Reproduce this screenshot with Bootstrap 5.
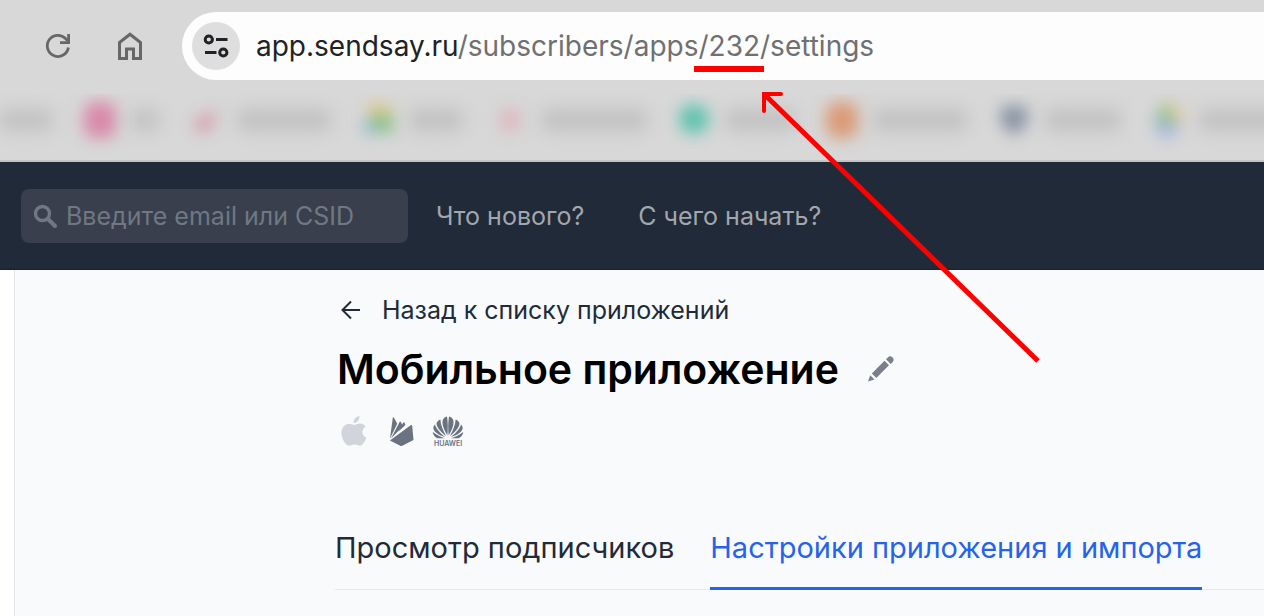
<!DOCTYPE html>
<html lang="ru">
<head>
<meta charset="utf-8">
<meta name="viewport" content="width=device-width, initial-scale=1">
<title>Мобильное приложение</title>
<link href="https://cdn.jsdelivr.net/npm/bootstrap@5.3.0/dist/css/bootstrap.min.css" rel="stylesheet">
<style>
  body { font-family: Inter, "Liberation Sans", sans-serif; background: #fff; overflow-x: hidden; }
  svg { display: block; flex: none; }

  /* browser toolbar */
  .browser-top { background: #d8d8d8; border-bottom: 2px solid #c4c4c4; }
  .toolbar-row { padding: 12px 0 12px 42px; gap: 40px; }
  .tool-btn { width: 32px; height: 32px; color: #676767; }
  .address { background: #fdfdfd; height: 68px; border-radius: 34px 0 0 34px; padding-left: 10px; gap: 16px; margin-left: -4px; }
  .site-btn { width: 48px; height: 48px; background: #dedede; color: #202226; }
  .url { font-size: 28px; line-height: 40px; color: #6f7071; outline: 0; white-space: nowrap; }
  .url-host { color: #202226; }
  .pointed::after { content: ""; position: absolute; left: -4px; right: 6px; top: 100%; height: 6px; background: #f00; }
  .arrow { position: absolute; left: 100%; top: 100%; margin: 24px 0 0 -10px; z-index: 10; pointer-events: none; }

  .marks { height: 68px; padding-top: 2px; }
  .marks-clip { height: 66px; overflow: hidden; gap: 32px; padding-bottom: 14px; }
  .mark-link { gap: 16px; flex: none; }
  .mark-icon { width: 32px; height: 36px; flex: none; filter: blur(8px); }
  .mark-square { border-radius: 10px; }
  .mark-text { height: 20px; flex: none; background: #bfbfbf; filter: blur(9px); }
  .w-xs { width: 26px; } .w-s { width: 52px; } .w-m { width: 68px; } .w-ml { width: 74px; } .w-l { width: 92px; } .w-xl { width: 104px; }

  /* application header */
  .app-bar { background: #212a38; min-height: 108px; padding: 0 21px; gap: 28px; border-bottom: 1px solid #1a2030; }
  .search-box { width: 387px; height: 54px; border-radius: 8px; background: #393f4c; color: #6f7883; padding: 0 12px; gap: 9px; }
  .search-box input { font-size: 25px; line-height: 32px; color: #6f7883; }
  .search-box input::placeholder { color: #6f7883; opacity: 1; }
  .top-link { font-size: 25px; line-height: 32px; color: #a2a7ae; padding: 0; }
  .top-links { gap: 54px; }

  /* page */
  .page { margin-left: 14px; border-left: 1px solid #e3e5ea; background: #f9fafc; padding: 22px 0 26px 320px; min-height: calc(100vh - 270px); }
  .back-link { font-size: 25px; line-height: 36px; color: #212a38; gap: 17px; padding-left: 2px; }
  .page-title { font-size: 41px; line-height: 56px; font-weight: 600; color: #000; }
  .title-row { gap: 28px; padding: 11px 0 0 2px; }
  .edit-btn { color: #7a7f8a; }
  .platforms { gap: 16px; padding: 19px 0 0 5px; color: #6b7280; }
  .tab-row { margin-top: 71px; gap: 36px; border-bottom: 1px solid #e5e7eb; }
  .tab-link { font-size: 29px; line-height: 40px; color: #212a38; padding: 9px 0 19px; border: 0; border-bottom: 3px solid transparent; margin-bottom: -1px; background: none; white-space: nowrap; }
  .tab-link.active { color: #2563eb; border-bottom-color: #2563eb; }
</style>
</head>
<body>
<header class="browser-top">
  <div class="toolbar-row d-flex align-items-center">
    <button class="tool-btn btn p-0 border-0" type="button" aria-label="Обновить">
      <svg width="32" height="32" viewBox="0 0 32 32" fill="none" stroke="currentColor" stroke-width="2.800"><path d="M26.400 17.500A10.600 10.600 0 1 1 23.500 8.500L26.500 11.500"/><path d="M26.600 4V12.600H18"/></svg>
    </button>
    <button class="tool-btn btn p-0 border-0" type="button" aria-label="Домой">
      <svg width="32" height="32" viewBox="0 0 32 32" fill="none" stroke="currentColor" stroke-width="3"><path d="M5.500 28.500V12.500L16 4.200L26.500 12.500V28.500H19.500V19H12.500V28.500Z"/></svg>
    </button>
    <div class="address d-flex align-items-center flex-grow-1">
      <button class="site-btn btn rounded-circle p-0 border-0 d-flex align-items-center justify-content-center" type="button" aria-label="Сведения о сайте">
        <svg width="26" height="26" viewBox="0 0 26 26" fill="none" stroke="currentColor" stroke-width="3"><circle cx="5.800" cy="6.500" r="3.600"/><path d="M13 6.500H24.500M2 19.500H13.500"/><circle cx="20.300" cy="19.500" r="3.600"/></svg>
      </button>
      <div class="url" role="textbox" aria-label="Адрес"><span class="url-host">app.sendsay.ru</span>/subscribers/apps<span class="pointed position-relative d-inline-block">/232/<svg class="arrow" width="284" height="276" viewBox="0 0 284 276" fill="none" stroke="#f00" stroke-width="4"><path d="M4 4L278 271" stroke-width="5"/><path d="M4 21V4H21" stroke-linecap="round"/></svg></span>settings</div>
    </div>
  </div>
  <nav class="marks" aria-label="Закладки">
    <div class="marks-clip d-flex align-items-center">
      <a class="mark-link d-flex align-items-center" href="#"><span class="mark-text w-s"></span></a>
      <a class="mark-link d-flex align-items-center" href="#"><span class="mark-icon mark-square" style="background:#d988a8"></span><span class="mark-text w-xs"></span></a>
      <a class="mark-link d-flex align-items-center" href="#"><svg class="mark-icon" viewBox="0 0 32 36"><path d="M4 16H14L26 4L22 28L6 30Z" fill="#d49aa6"/></svg><span class="mark-text w-l"></span></a>
      <a class="mark-link d-flex align-items-center" href="#"><svg class="mark-icon" viewBox="0 0 32 36"><path d="M6 2H28V16H6Z" fill="#dcc680"/><path d="M1 17H14V32H1Z" fill="#94bcd8"/><path d="M12 14H31V30H12Z" fill="#80c080"/></svg><span class="mark-text w-s"></span></a>
      <a class="mark-link d-flex align-items-center" href="#"><svg class="mark-icon" viewBox="0 0 32 36"><path d="M7 7H25V29H7Z" fill="#dfb5bd"/></svg><span class="mark-text w-xl"></span></a>
      <a class="mark-link d-flex align-items-center" href="#"><svg class="mark-icon" viewBox="0 0 32 36"><circle cx="16" cy="17" r="15" fill="#5cc2ae"/></svg><span class="mark-text w-m"></span></a>
      <a class="mark-link d-flex align-items-center" href="#"><span class="mark-icon mark-square" style="background:#da9a76"></span><span class="mark-text w-l"></span></a>
      <a class="mark-link d-flex align-items-center" href="#"><svg class="mark-icon" viewBox="0 0 32 36"><path d="M3 4H29V22L16 34L3 22Z" fill="#8692a3"/></svg><span class="mark-text w-ml"></span></a>
      <a class="mark-link d-flex align-items-center" href="#"><svg class="mark-icon" viewBox="0 0 32 36"><path d="M2 20L12 0L20 18L12 26Z" fill="#80c08a"/><path d="M14 1H22L32 20H20Z" fill="#dcc680"/><path d="M2 20H28L22 35H8Z" fill="#a0b4de"/></svg><span class="mark-text w-l"></span></a>
    </div>
  </nav>
</header>

<nav class="app-bar d-flex align-items-center">
  <label class="search-box d-flex align-items-center">
    <svg width="24" height="24" viewBox="0 0 24 24" fill="none" stroke="currentColor" stroke-width="3.400"><circle cx="9.500" cy="9.500" r="7"/><path d="M15 15L22 22" stroke-width="4" stroke-linecap="round"/></svg>
    <input class="border-0 bg-transparent p-0 w-100" type="text" aria-label="Поиск" placeholder="Введите email или CSID">
  </label>
  <div class="top-links nav flex-nowrap">
    <a class="top-link nav-link" href="#">Что нового?</a>
    <a class="top-link nav-link" href="#">С чего начать?</a>
  </div>
</nav>

<main class="page">
  <a class="back-link d-inline-flex align-items-center text-decoration-none" href="#">
    <svg width="28" height="28" viewBox="0 0 28 28" fill="none" stroke="currentColor" stroke-width="2"><path d="M23 14H6M14 5.500L5.500 14L14 22.500"/></svg>
    <span>Назад к списку приложений</span>
  </a>
  <div class="title-row d-flex align-items-center">
    <h1 class="page-title m-0">Мобильное приложение</h1>
    <button class="edit-btn btn p-0 border-0" type="button" aria-label="Изменить название">
      <svg width="28" height="28" viewBox="0 0 28 28" fill="currentColor"><path d="M1 26.500L3.200 20.200L7.500 24.500Z"/><path d="M4.800 18.500L17.500 5.800L22 10.300L9.300 23Z"/><path d="M19 4.300L20.800 2.500A3.300 3.300 0 0 1 25.500 7.200L23.700 9Z"/></svg>
    </button>
  </div>
  <div class="platforms d-flex">
    <svg width="30" height="30" viewBox="0 0 30 30" fill="#d1d5db" role="img" aria-label="Apple"><path d="M19.500 0C19.800 3.600 17 7.200 13.500 7C13.200 3.600 16.200 .4 19.500 0Z"/><path d="M14.200 9C15.600 9 17.300 7.400 20 7.400C22.500 7.400 24.400 8.700 25.600 10.400C21 13.200 21.700 19.500 26.400 21.500C25.300 24.700 22.600 29.800 19.600 29.800C17.700 29.800 16.900 28.600 14.500 28.600C12.100 28.600 11.200 29.800 9.400 29.800C5.500 29.800 1.500 22.400 1.500 17.200C1.500 11.300 5.100 7.700 9 7.700C11.200 7.700 13 9 14.200 9Z"/></svg>
    <svg width="30" height="30" viewBox="0 0 30 30" fill="currentColor" role="img" aria-label="Firebase"><path d="M4 22.500L6.800 1.800Q7.200 .7 8 1.700L11.200 7.700Z"/><path d="M5 22.500L13.600 6Q14.200 5.200 14.800 6L17 10.300Z"/><path d="M12.500 15.500L17.200 6.500Q17.800 5.800 18.400 6.600L19.400 9Z"/><path d="M3.900 24.600L24.700 9.200Q26 8.600 26.200 9.800L27.500 24L16.300 29.700Q15.300 30.200 14.300 29.700Z"/></svg>
    <svg width="32" height="32" viewBox="0 0 32 32" fill="currentColor" role="img" aria-label="Huawei">
      <g id="petals"><path d="M15.300 19.500C11.500 13 9.500 7.500 11 3.500Q12.500 .6 15 .6C16 6 16 14 15.300 19.500Z"/><path d="M14 20C7.500 15 4 10 4.600 7Q5.500 4 8.400 3.500C8.500 8.500 11 14.500 14 20Z"/><path d="M13.300 21C7 19.500 1.300 15.500 1.300 12Q1.300 10.300 2.800 8.500C4.500 13 9 18 13.300 21Z"/><path d="M13 22.300H6.500C3.500 22.300 1 19 .8 16C4.500 18.800 9 21 13 22.300Z"/></g>
      <use href="#petals" transform="translate(32 0) scale(-1 1)"/>
      <text x="16" y="30" text-anchor="middle" font-size="7" font-weight="600">HUAWEI</text>
    </svg>
  </div>
  <div class="tab-row d-flex" role="tablist">
    <button class="tab-link" type="button" role="tab" aria-selected="false">Просмотр подписчиков</button>
    <button class="tab-link active" type="button" role="tab" aria-selected="true">Настройки приложения и импорта</button>
  </div>
</main>
<script src="https://cdn.jsdelivr.net/npm/bootstrap@5.3.0/dist/js/bootstrap.bundle.min.js"></script>
</body>
</html>
